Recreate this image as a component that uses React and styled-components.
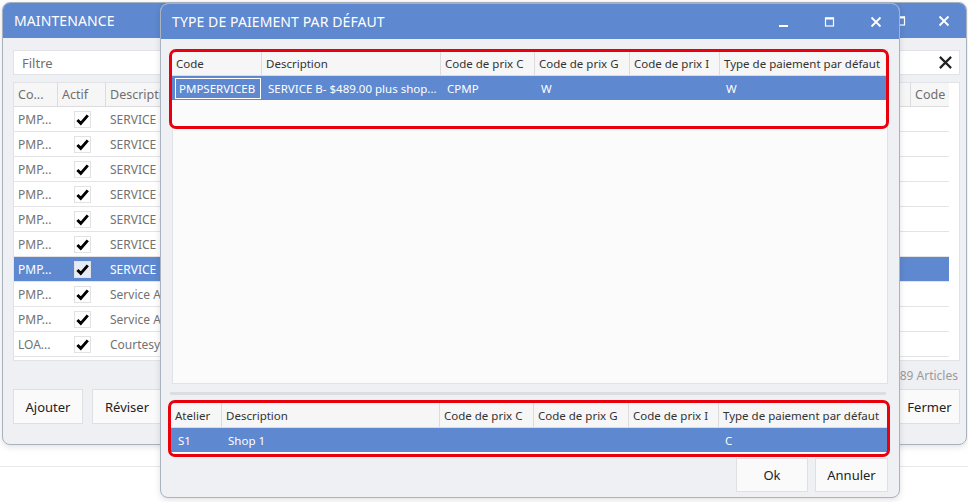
import React from "react";
import styled, { createGlobalStyle } from "styled-components";

const GlobalStyle = createGlobalStyle`
  html, body {
    margin: 0;
    padding: 0;
    background: #ffffff;
  }
  * {
    box-sizing: border-box;
  }
`;

const BLUE = "#5e88cf";

const Desktop = styled.div`
  position: relative;
  width: 968px;
  height: 502px;
  overflow: hidden;
  background: linear-gradient(#fff 466px, #e9e9e9 466px, #e9e9e9 467px, #fff 467px);
  font-family: "Noto Sans", "Open Sans", sans-serif;
  font-size: 11.5px;
  color: #333;
`;

// windows sit on a free desktop, so they get coordinates
const Window = styled.div`
  position: absolute;
  left: ${({ $x }) => $x}px;
  top: ${({ $y }) => $y}px;
  width: ${({ $w }) => $w}px;
  height: ${({ $h }) => $h}px;
  display: flex;
  flex-direction: column;
  background: #eff0f4;
  border: 1px solid #a9b2bf;
  border-radius: 8px;
  overflow: hidden;
  box-shadow: 0 2px 6px rgba(0, 0, 0, 0.12);
`;

const TitleBar = styled.div`
  height: 35px;
  flex: none;
  display: flex;
  align-items: center;
  background: ${BLUE};
  color: #fff;
  font-size: 14px;
  padding-left: 11px;
`;

const Title = styled.div`
  flex: 1;
  letter-spacing: 0.1px;
`;

const CtrlButton = styled.div`
  width: ${({ $w }) => $w || 46}px;
  height: 35px;
  display: flex;
  align-items: center;
  justify-content: center;
`;

const MinIcon = () => (
  <svg width="12" height="12" viewBox="0 0 12 12">
    <rect x="1" y="9" width="9" height="2" fill="#fff" />
  </svg>
);

const MaxIcon = () => (
  <svg width="12" height="12" viewBox="0 0 12 12">
    <rect x="1.5" y="2" width="8" height="8" fill="none" stroke="#fff" strokeWidth="1.2" />
    <rect x="1" y="1.5" width="9" height="2" fill="#fff" />
  </svg>
);

const CloseIcon = ({ size = 12, color = "#fff", w = 1.8 }) => (
  <svg width={size} height={size} viewBox="0 0 12 12">
    <path d="M1.5 1.5 L10.5 10.5 M10.5 1.5 L1.5 10.5" stroke={color} strokeWidth={w} />
  </svg>
);

const Check = () => (
  <svg width="13" height="13" viewBox="0 0 13 13">
    <path d="M1.4 7 L4.8 10.4 L11.8 2.4" fill="none" stroke="#000" strokeWidth="2.9" strokeLinejoin="miter" />
  </svg>
);

/* ---------- background MAINTENANCE window ---------- */

const MainBody = styled.div`
  flex: 1;
  display: flex;
  flex-direction: column;
  padding: 12px 6px 0 10px;
`;

const FilterBox = styled.div`
  height: 25px;
  display: flex;
  align-items: center;
  justify-content: space-between;
  background: #fff;
  border: 1px solid #e2e3e6;
  padding: 0 6px 0 8px;
  color: #707070;
  font-size: 13px;
`;

const ListBox = styled.div`
  margin-top: 7px;
  height: 279px;
  background: #fff;
  border: 1px solid #e2e3e6;
  padding-right: 10px;
`;

const MainCols = "44px 48px 1fr 38px";

const HeadRow = styled.div`
  display: grid;
  grid-template-columns: ${({ $cols }) => $cols};
  height: ${({ $h }) => $h || 24}px;
  background: #f6f6f7;
  border-bottom: 1px solid #dcdcdf;
`;

const HeadCell = styled.div`
  display: flex;
  align-items: center;
  padding-left: 4px;
  border-right: 1px solid #dcdcdf;
  color: ${({ $muted }) => ($muted ? "#6f6f6f" : "#333")};
  font-size: ${({ $fs }) => $fs || 11.5}px;
  white-space: nowrap;
  overflow: hidden;
  &:last-child {
    border-right: none;
  }
`;

const ListRow = styled.div`
  display: grid;
  grid-template-columns: ${MainCols};
  height: 25px;
  border-bottom: 1px solid #e4e4e6;
  background: ${({ $sel }) => ($sel ? BLUE : "transparent")};
  color: ${({ $sel }) => ($sel ? "#fff" : "#727272")};
  font-size: 12px;
`;

const ListCell = styled.div`
  display: flex;
  align-items: center;
  justify-content: ${({ $center }) => ($center ? "center" : "flex-start")};
  padding-left: ${({ $center }) => ($center ? 0 : 4)}px;
  white-space: nowrap;
  overflow: hidden;
`;

const CheckBox = styled.div`
  width: 17px;
  height: 17px;
  display: flex;
  align-items: center;
  justify-content: center;
  background: ${({ $sel }) => ($sel ? "#e6ecf7" : "#fff")};
  border: 1px solid #e2e2e2;
`;

const Counter = styled.div`
  height: 28px;
  display: flex;
  align-items: center;
  justify-content: flex-end;
  padding-right: 2px;
  color: #9a9a9a;
  font-size: 12px;
`;

const ButtonRow = styled.div`
  display: flex;
  gap: ${({ $gap }) => $gap || 9}px;
  justify-content: ${({ $end }) => ($end ? "flex-end" : "flex-start")};
  margin-top: ${({ $mt }) => $mt || 0}px;
`;

const Button = styled.div`
  width: ${({ $w }) => $w}px;
  height: ${({ $h }) => $h || 35}px;
  display: flex;
  align-items: center;
  justify-content: center;
  background: #fafafa;
  border: 1px solid #e0e0e2;
  color: #222;
  font-size: 13px;
  margin-left: ${({ $push }) => ($push ? "auto" : "0")};
`;

const mainRows = [
  ["PMP...", "SERVICE D"],
  ["PMP...", "SERVICE D"],
  ["PMP...", "SERVICE D"],
  ["PMP...", "SERVICE C"],
  ["PMP...", "SERVICE C"],
  ["PMP...", "SERVICE B"],
  ["PMP...", "SERVICE B", true],
  ["PMP...", "Service A-"],
  ["PMP...", "Service A-"],
  ["LOA...", "Courtesy c"],
];

/* ---------- foreground dialog ---------- */

const DialogBody = styled.div`
  flex: 1;
  display: flex;
  flex-direction: column;
  padding: 10px 11px 7px 11px;
`;

const UpperPanel = styled.div`
  height: 335px;
  flex: none;
  background: #fbfbfb;
  border: 1px solid #e1e2e5;
  padding: 2px 0 0 0;
`;

const Highlight = styled.div`
  outline: 3px solid #e8000c;
  border-radius: 4px;
  background: #fbfbfb;
  margin: ${({ $m }) => $m || "0"};
`;

const Splitter = styled.div`
  height: 3px;
  margin: 8px 2px 0 -2px;
  background: #dcdde1;
`;

const DataRow = styled.div`
  display: grid;
  grid-template-columns: ${({ $cols }) => $cols};
  height: 24px;
  background: ${BLUE};
  color: #fff;
  font-size: 11.5px;
`;

const DataCell = styled.div`
  display: flex;
  align-items: center;
  padding-left: ${({ $pl }) => $pl ?? 6}px;
  white-space: nowrap;
  overflow: hidden;
`;

const FocusCell = styled.div`
  margin: 2px 1px 1px 3px;
  border: 1px solid #fff;
  display: flex;
  align-items: center;
  padding-left: 3px;
  white-space: nowrap;
  overflow: hidden;
`;

const Blank = styled.div`
  height: ${({ $h }) => $h}px;
`;

const upperCols = "90px 179px 94px 95px 90px 1fr";
const lowerCols = "51px 218px 94px 95px 90px 1fr";

export default function App() {
  return (
    <Desktop>
      <GlobalStyle />

      <Window $x={2} $y={2} $w={965} $h={443}>
        <TitleBar>
          <Title>MAINTENANCE</Title>
          <CtrlButton $w={42}>
            <MinIcon />
          </CtrlButton>
          <CtrlButton $w={42}>
            <MaxIcon />
          </CtrlButton>
          <CtrlButton $w={44}>
            <CloseIcon />
          </CtrlButton>
        </TitleBar>
        <MainBody>
          <FilterBox>
            <span>Filtre</span>
            <CloseIcon size={15} color="#222" w={1.7} />
          </FilterBox>
          <ListBox>
            <HeadRow $cols={MainCols} $h={24}>
              <HeadCell $muted $fs={12.5}>Co...</HeadCell>
              <HeadCell $muted $fs={12.5}>Actif</HeadCell>
              <HeadCell $muted $fs={12.5}>Descripti...</HeadCell>
              <HeadCell $muted $fs={12.5}>Code de prix</HeadCell>
            </HeadRow>
            {mainRows.map(([code, desc, sel], i) => (
              <ListRow key={i} $sel={sel}>
                <ListCell>{code}</ListCell>
                <ListCell $center>
                  <CheckBox $sel={sel}>
                    <Check />
                  </CheckBox>
                </ListCell>
                <ListCell>{desc}</ListCell>
                <ListCell />
              </ListRow>
            ))}
          </ListBox>
          <Counter>1189 Articles</Counter>
          <ButtonRow>
            <Button $w={70}>Ajouter</Button>
            <Button $w={70}>Réviser</Button>
            <Button $w={61} $push>
              Fermer
            </Button>
          </ButtonRow>
        </MainBody>
      </Window>

      <Window $x={160} $y={3} $w={740} $h={495}>
        <TitleBar>
          <Title>TYPE DE PAIEMENT PAR DÉFAUT</Title>
          <CtrlButton>
            <MinIcon />
          </CtrlButton>
          <CtrlButton>
            <MaxIcon />
          </CtrlButton>
          <CtrlButton>
            <CloseIcon />
          </CtrlButton>
        </TitleBar>
        <DialogBody>
          <UpperPanel>
            <Highlight $m="0 1px 0 -1px">
              <HeadRow $cols={upperCols}>
                <HeadCell>Code</HeadCell>
                <HeadCell>Description</HeadCell>
                <HeadCell>Code de prix C</HeadCell>
                <HeadCell>Code de prix G</HeadCell>
                <HeadCell>Code de prix I</HeadCell>
                <HeadCell>Type de paiement par défaut</HeadCell>
              </HeadRow>
              <DataRow $cols={upperCols}>
                <FocusCell>PMPSERVICEB</FocusCell>
                <DataCell>SERVICE B- $489.00 plus shop...</DataCell>
                <DataCell>CPMP</DataCell>
                <DataCell>W</DataCell>
                <DataCell />
                <DataCell>W</DataCell>
              </DataRow>
              <Blank $h={26} />
            </Highlight>
          </UpperPanel>
          <Splitter />
          <Highlight $m="8px 1px 0 -1px">
            <HeadRow $cols={lowerCols} $h={25}>
              <HeadCell>Atelier</HeadCell>
              <HeadCell>Description</HeadCell>
              <HeadCell>Code de prix C</HeadCell>
              <HeadCell>Code de prix G</HeadCell>
              <HeadCell>Code de prix I</HeadCell>
              <HeadCell>Type de paiement par défaut</HeadCell>
            </HeadRow>
            <DataRow $cols={lowerCols}>
              <DataCell $pl={7}>S1</DataCell>
              <DataCell>Shop 1</DataCell>
              <DataCell />
              <DataCell />
              <DataCell />
              <DataCell>C</DataCell>
            </DataRow>
            <Blank $h={2} />
          </Highlight>
          <ButtonRow $end $gap={7} $mt={4}>
            <Button $w={72} $h={34}>
              Ok
            </Button>
            <Button $w={73} $h={34}>
              Annuler
            </Button>
          </ButtonRow>
        </DialogBody>
      </Window>
    </Desktop>
  );
}
